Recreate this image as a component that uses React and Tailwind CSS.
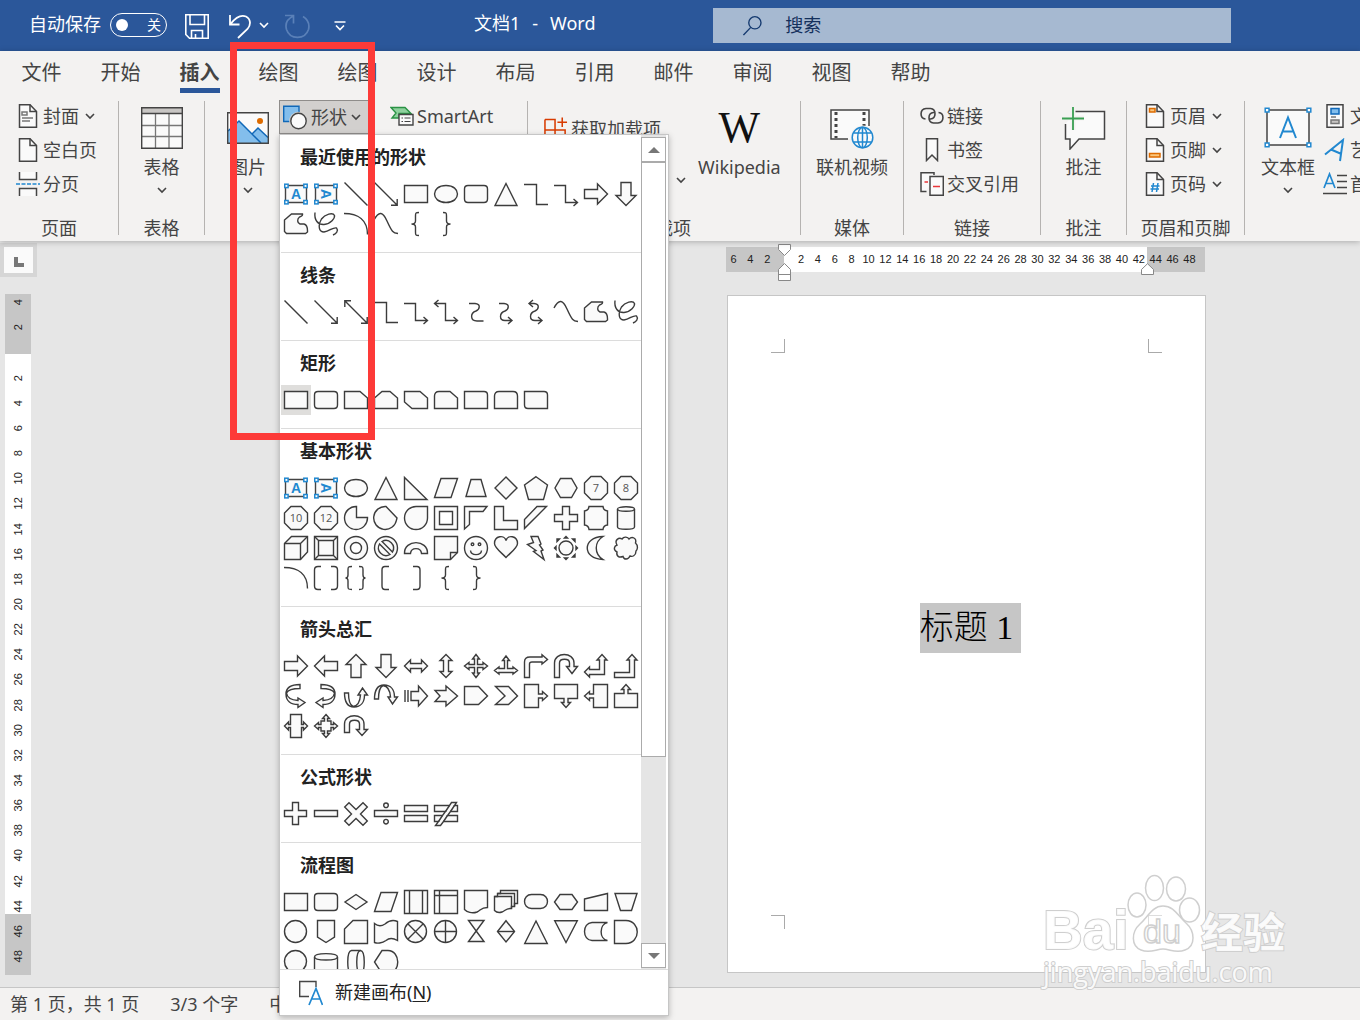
const OCTAGON = 'M7 .5H17L23.5 7V17L17 23.5H7L.5 17V7Z';
const RING = 'M12 .5A11.5 11.5 0 1 0 12 23.5A11.5 11.5 0 1 0 12 .5Z';
const RING_SMALL = 'M11.5 .5A11 11 0 1 0 11.5 22.5A11 11 0 1 0 11.5 .5Z';
const CURVED = 'M15 .5C6 .5 1 4 1 10C1 17 6 20.5 13 20.5V23.5L20 18.5L13 14V16.5C6 16 2 13 1.5 9C3 6 8 4.5 15 4.5Z';

// f = filled outline, l = plain line, n = number, t = transform
const SHAPES = {
  line:            { l: 'M.5 .5L23.5 23.5' },
  arrow:           { l: 'M.5 .5L23 23M17 23.2H23.2V17' },
  doubleArrow:     { l: 'M1 1L23 23M17 23.2H23.2V17M7 .8H.8V7' },
  rect:            { f: 'M.5 3.5H23.5V20.5H.5Z' },
  ellipse:         { f: 'M12 3.5C-3.3 3.5-3.3 20.5 12 20.5C27.3 20.5 27.3 3.5 12 3.5Z' },
  roundRect:       { f: 'M4 3.5H20Q23.5 3.5 23.5 7V17Q23.5 20.5 20 20.5H4Q.5 20.5 .5 17V7Q.5 3.5 4 3.5Z' },
  triangle:        { f: 'M12 1.5L23 23.5H1Z' },
  elbow:           { l: 'M0 2.5H12.5V22.5H24' },
  elbowArrow:      { l: 'M0 3.5H11.5V20.5H23.5M19.5 17L23.5 20.5 19.5 24' },
  elbowDouble:     { l: 'M.5 3.5H11.5V20.5H23.5M19.5 17L23.5 20.5 19.5 24M4.5 0L.5 3.5 4.5 7' },
  arrowRight:      { f: 'M.5 7.5H13.5V2L23.5 12 13.5 22V16.5H.5Z' },
  arrowLeft:       { f: 'M23.5 7.5H10.5V2L.5 12 10.5 22V16.5H23.5Z' },
  arrowUp:         { f: 'M7 23.5V10.5H2L12 .5 22 10.5H17V23.5Z' },
  arrowDown:       { f: 'M7 .5V13.5H2L12 23.5 22 13.5H17V.5Z' },
  freeform:        { f: 'M.5 8L7.5 2H18.5C19 4 18 4 15.5 5C13 7 13 11 16 12H20C24 13 23.5 17 23.5 20L21.5 21.5H2.5L.5 19.5Z' },
  scribble:        { l: 'M1 .5C0 8 4 13 10 12.5C17 12 21 6 20.5 3.5C19 0 11 2 7.5 7C3.5 14 5 20 10 20C16 19 19 15 22.5 16C25 19 22 21.5 19 23' },
  arc:             { l: 'M0 1.5C14 1.5 23.5 8 23.5 22.5' },
  curve:           { l: 'M0 8C5-1.5 9 0 13 9C18 20 19 21 24 21.5' },
  scurve:          { l: 'M5 3.5H11C17 4 16 9 12 11C6 13 6 21 13 21H19.5' },
  scurveArrow:     { l: 'M5 3.5H10C16 4 15 9 11 11C5 13 5 20.5 11 20.5H18M14 17L18 20.5 14 24' },
  scurveDouble:    { l: 'M5 3.5H10C16 4 15 9 11 11C5 13 5 20.5 11 20.5H18M14 17L18 20.5 14 24M9 0L5 3.5 9 7' },
  braceL:          { l: 'M15 .5C11.5 .5 11.5 1 11.5 4V9C11.5 11 10 12 7.5 12C10 12 11.5 13 11.5 15V20C11.5 23 11.5 23.5 15 23.5' },
  braceR:          { l: 'M9 .5C12.5 .5 12.5 1 12.5 4V9C12.5 11 14 12 16.5 12C14 12 12.5 13 12.5 15V20C12.5 23 12.5 23.5 9 23.5' },
  snip1:           { f: 'M.5 3.5H16L23.5 10V20.5H.5Z' },
  snip2:           { f: 'M.5 10L8 3.5H16L23.5 10V20.5H.5Z' },
  snipDiag:        { f: 'M.5 3.5H16L23.5 10V20.5H8L.5 14Z' },
  snipRound:       { f: 'M.5 8Q.5 3.5 5 3.5H16L23.5 10V20.5H.5Z' },
  round1:          { f: 'M.5 3.5H20Q23.5 3.5 23.5 7V20.5H.5Z' },
  round2:          { f: 'M.5 8Q.5 3.5 5 3.5H19Q23.5 3.5 23.5 8V20.5H.5Z' },
  roundDiag:       { f: 'M.5 3.5H20Q23.5 3.5 23.5 7V20.5H4Q.5 20.5 .5 17Z' },
  rightTriangle:   { f: 'M.5 1.5V23.5H23Z' },
  parallelogram:   { f: 'M7 2.5H23.5L17 21.5H.5Z' },
  trapezoid:       { f: 'M7 3.5H17L22 20.5H2Z' },
  diamond:         { f: 'M12 1L23 12 12 23 1 12Z' },
  pentagon:        { f: 'M12 .7L23.5 9 19.5 23.5H4.5L.5 9Z' },
  hexagon:         { f: 'M6.5 2.5H17.5L23 12 17.5 21.5H6.5L1 12Z' },
  heptagon:        { f: OCTAGON, n: '7' },
  octagon:         { f: OCTAGON, n: '8' },
  decagon:         { f: OCTAGON, n: '10' },
  dodecagon:       { f: OCTAGON, n: '12' },
  pie:             { f: 'M12.5 11.5H23.5A11.5 11.5 0 1 1 12.5 .5Z' },
  chord:           { f: 'M12 .5A11.5 11.5 0 1 0 22.5 14L23 12Z' },
  teardrop:        { f: 'M23.5 .5V12A11.5 11.5 0 1 1 12 .5Z' },
  frame:           { f: 'M.5 .5H23.5V23.5H.5ZM5.5 5.5V18.5H18.5V5.5Z' },
  halfFrame:       { f: 'M.5 .5H23L19 5.5H5.5V18.5L.5 23Z' },
  lShape:          { f: 'M.5 .5H9.5V14.5H23.5V23.5H.5Z' },
  stripe:          { f: 'M13 .5H22.5L.5 22.5V13.5Z' },
  cross:           { f: 'M8.5 .5H15.5V8.5H23.5V15.5H15.5V23.5H8.5V15.5H.5V8.5H8.5Z' },
  plaque:          { f: 'M5 .5H19A5 5 0 0 0 23.5 5V19A5 5 0 0 0 19 23.5H5A5 5 0 0 0 .5 19V5A5 5 0 0 0 5 .5Z' },
  can:             { f: 'M3.5 3C3.5 0 20.5 0 20.5 3V21C20.5 24 3.5 24 3.5 21Z', l: 'M3.5 3C3.5 6 20.5 6 20.5 3' },
  cube:            { f: 'M.5 7.5L7.5 .5H23.5V16L16.5 23.5H.5Z', l: 'M.5 7.5H16.5V23.5M16.5 7.5L23.5 .5' },
  bevel:           { f: 'M.5 .5H23.5V23.5H.5Z', l: 'M4.5 4.5H19.5V19.5H4.5ZM.5 .5L4.5 4.5M23.5 .5L19.5 4.5M.5 23.5L4.5 19.5M23.5 23.5L19.5 19.5' },
  donut:           { f: RING + 'M12 6.5A5.5 5.5 0 1 0 12 17.5A5.5 5.5 0 1 0 12 6.5Z' },
  noSymbol:        { f: RING, l: 'M8 5.5A7.7 7.7 0 0 1 18.5 16ZM5.5 8A7.7 7.7 0 0 0 16 18.5Z' },
  blockArc:        { f: 'M.5 17.5C0 3 24 3 23.5 17.5H17.5C17 11 7 11 6.5 17.5Z' },
  folded:          { f: 'M.5 .5H23.5V16.5L16.5 23.5H.5Z', l: 'M16.5 23.5V16.5H23.5' },
  smile:           { f: RING, l: 'M6.5 14.5C7 20 17 20 17.5 14.5M8.5 7A1.3 1.3 0 1 0 8.5 9.6A1.3 1.3 0 1 0 8.5 7M15.5 7A1.3 1.3 0 1 0 15.5 9.6A1.3 1.3 0 1 0 15.5 7' },
  heart:           { f: 'M12 4.5C13.5-1.5 23.5-.5 23.5 7.5C23.5 12 16 17 12 21.5C8 17 .5 12 .5 7.5C.5-.5 10.5-1.5 12 4.5Z' },
  lightning:       { f: 'M7 .5H14L17 8L15.5 9L19 14L17 15L20 23.5L9.5 15.5L12 14.5L3.5 8.5L9.5 6.5Z' },
  sun:             { f: 'M12 5A7 7 0 1 0 12 19A7 7 0 1 0 12 5Z', l: 'M10.5 2L12 .5 13.5 2ZM10.5 22L12 23.5 13.5 22ZM2 10.5L.5 12 2 13.5ZM22 10.5L23.5 12 22 13.5ZM3 5.5V3H5.5ZM21 5.5V3H18.5ZM3 18.5V21H5.5ZM21 18.5V21H18.5Z' },
  moon:            { f: 'M19 .5C-2 1-2 23 19 23.5C10 18 10 6 19 .5Z' },
  cloud:           { f: 'M3 9C0 4 5 1 8 3C10 0 14 1 15 3C18 0 23 2 21.5 7C25 10 23 14 22 15C22 20 18 21 16 20C14 24 10 24 9 20.5C5 22 2 20 3 16C-1 14 0 10 3 9Z' },
  bracketPair:     { l: 'M7 .5H4Q.5 .5 .5 4V20Q.5 23.5 4 23.5H7M17 .5H20Q23.5 .5 23.5 4V20Q23.5 23.5 20 23.5H17' },
  bracePair:       { l: 'M8 .5C4 .5 4 1 4 4V9Q4 12 1.5 12Q4 12 4 15V20C4 23 4 23.5 8 23.5M15 .5C19 .5 19 1 19 4V9Q19 12 21.5 12Q19 12 19 15V20C19 23 19 23.5 15 23.5' },
  bracketL:        { l: 'M15 .5H11Q8 .5 8 4V20Q8 23.5 11 23.5H15' },
  bracketR:        { l: 'M9 .5H13Q16 .5 16 4V20Q16 23.5 13 23.5H9' },
  leftRight:       { f: 'M.5 12L6.5 6V9.5H17.5V6L23.5 12 17.5 18V14.5H6.5V18Z' },
  upDown:          { f: 'M.5 12L6.5 6V9.5H17.5V6L23.5 12 17.5 18V14.5H6.5V18Z', t: 'rotate(90 12 12)' },
  quad:            { f: 'M12 .5L15.5 5H13.5V10.5H19V8.5L23.5 12 19 15.5V13.5H13.5V19H15.5L12 23.5 8.5 19H10.5V13.5H5V15.5L.5 12 5 8.5V10.5H10.5V5H8.5Z' },
  leftRightUp:     { f: 'M12 2L15.5 6.5H13.5V14.5H19V13L23.5 16.5 19 20V18.5H5V20L.5 16.5 5 13V14.5H10.5V6.5H8.5Z' },
  bent:            { f: 'M.5 23.5V8Q.5 3 6 3H18V.7L23.5 5.5 18 10V8H8Q5.5 8 5.5 10V23.5Z' },
  uTurn:           { f: 'M.5 23.5V9C.5-2.3 20-2.3 20 9V12.5H23.5L18 19.5 12.5 12.5H15.5V9C15.5 4 5.5 4 5.5 9V23.5Z' },
  leftUp:          { f: 'M.5 18L5.5 13V15.5H15.5V6H13L18 .5 23 6H20.5V20.5H5.5V23Z' },
  bentUp:          { f: 'M.5 18.5H15.5V6H13L18 .5 23 6H20.5V23.5H.5Z' },
  curvedRight:     { f: CURVED, t: 'translate(1 0)' },
  curvedLeft:      { f: CURVED, t: 'translate(22 0) scale(-1 1)' },
  curvedUp:        { f: CURVED, t: 'rotate(-90 12 12)' },
  curvedDown:      { f: CURVED, t: 'translate(0 24) scale(1 -1) rotate(-90 12 12)' },
  striped:         { f: 'M7 7.5H14.5V2L23.5 12 14.5 22V16.5H7Z', l: 'M1 6V18M4 6V18' },
  notched:         { f: 'M1 6.5H12V2L23.5 12 12 22V17.5H1L6 12Z' },
  homePlate:       { f: 'M.5 2.5H14.5L23.5 12 14.5 20.5H.5Z' },
  chevron:         { f: 'M1.5 2.5H14.5L23.5 12 14.5 20.5H1.5L11 12Z' },
  calloutRight:    { f: 'M.5 .5H14.5V10H18.5V7.5L23.5 12 18.5 16.5V14H14.5V23.5H.5Z' },
  calloutDown:     { f: 'M.5 .5H23.5V14.5H14V18.5H16.5L12 23.5 7.5 18.5H10V14.5H.5Z' },
  calloutLeft:     { f: 'M23.5 .5H9.5V10H5.5V7.5L.5 12 5.5 16.5V14H9.5V23.5H23.5Z' },
  calloutUp:       { f: 'M.5 23.5H23.5V9.5H14V5.5H16.5L12 .5 7.5 5.5H10V9.5H.5Z' },
  calloutLR:       { f: 'M6.5 .5H17.5V10.5H19.5V8L23.5 12 19.5 16V13.5H17.5V23.5H6.5V13.5H4.5V16L.5 12 4.5 8V10.5H6.5Z' },
  calloutQuad:     { f: 'M12 .5L15.5 4.5H13.5V7H17V10.5H19.5V8.5L23.5 12 19.5 15.5V13.5H17V17H13.5V19.5H15.5L12 23.5 8.5 19.5H10.5V17H7V13.5H4.5V15.5L.5 12 4.5 8.5V10.5H7V7H10.5V4.5H8.5Z' },
  circular:        { f: 'M.5 18.5V10C.5-1 20-1 20 10V15.5H23.5L18 21.5 12.5 15.5H15.5V10C15.5 5 5.5 5 5.5 10V18.5Z' },
  plus:            { f: 'M8.5 .5H14.5V8.5H22.5V14.5H14.5V22.5H8.5V14.5H.5V8.5H8.5Z' },
  minus:           { f: 'M.5 8.5H23.5V14.5H.5Z' },
  multiply:        { f: 'M5 .7L12 7.5 19 .7 23.3 5 16.5 12 23.3 19 19 23.3 12 16.5 5 23.3 .7 19 7.5 12 .7 5Z' },
  divide:          { f: 'M.5 8.5H23.5V14.5H.5ZM12 1A2.3 2.3 0 1 0 12 5.6A2.3 2.3 0 1 0 12 1ZM12 17.4A2.3 2.3 0 1 0 12 22A2.3 2.3 0 1 0 12 17.4Z' },
  equal:           { f: 'M.5 3.5H23.5V9.5H.5ZM.5 13.5H23.5V19.5H.5Z' },
  notEqual:        { f: 'M.5 3.5H15.5L17.5 .5H22.5L20.5 3.5H23.5V9.5H16.5L13.5 13.5H23.5V19.5H9.5L6.5 23.5H1.5L4.5 19.5H.5V13.5H8.5L11.5 9.5H.5Z', l: 'M15.5 3.5L11.5 9.5M20.5 3.5L16.5 9.5M8.5 13.5L4.5 19.5M13.5 13.5L9.5 19.5' },
  decision:        { f: 'M12 4.5L23 12 12 19.5 1 12Z' },
  predefined:      { f: 'M.5 .5H23.5V23.5H.5Z', l: 'M5.5 .5V23.5M18.5 .5V23.5' },
  internal:        { f: 'M.5 .5H23.5V23.5H.5Z', l: 'M5.5 .5V23.5M.5 5.5H23.5' },
  document:        { f: 'M.5 .5H23.5V17.5C17 17.5 17 20 13 22C8 24 3 22 .5 19.5Z' },
  multiDocument:   { f: 'M6.5 .5H23.5V13.5H20.5V16.5H17.5V18.5C12 18 11 21 8 22C5 23 2 22 .5 20.5V6.5H3.5V3.5H6.5Z', l: 'M.5 6.5H17.5V18.5M3.5 3.5H20.5V16.5' },
  terminator:      { f: 'M7.5 4.5H16.5C25.8 4.5 25.8 18.5 16.5 18.5H7.5C-1.8 18.5-1.8 4.5 7.5 4.5Z' },
  preparation:     { f: 'M6 4.5H18L23.5 12 18 19.5H6L.5 12Z' },
  manualInput:     { f: 'M.5 9L23.5 3.5V20.5H.5Z' },
  manualOp:        { f: 'M1 3.5H23L17.5 20.5H6.5Z' },
  connector:       { f: RING_SMALL },
  offPage:         { f: 'M3.5 .5H20.5V17L12 22.5 3.5 17Z' },
  card:            { f: 'M9 .5H23.5V23.5H.5V9Z' },
  tape:            { f: 'M.5 3.5C4 6.5 8 6 11 4C15 .5 20 0 23.5 1.5V20.5C19 18 15 18 12 20.5C8 23.5 3 23.5 .5 22.5Z' },
  summing:         { f: RING_SMALL, l: 'M4 4L19 19M19 4L4 19' },
  or:              { f: RING_SMALL, l: 'M11.5 .5V22.5M.5 11.5H22.5' },
  collate:         { f: 'M4.5 .5H20L12.2 11 4.5 21.5H20L12.2 11Z' },
  sort:            { f: 'M12 .7L20.5 11.5 12 22 3.5 11.5Z', l: 'M3.5 11.5H20.5' },
  extract:         { f: 'M12 1L23.3 23.5H.7Z' },
  merge:           { f: 'M.7 .7H23.3L12 22.5Z' },
  stored:          { f: 'M8 2.5H23.5C15 4 15 19.5 23.5 20.5H8C-2 20-2 3 8 2.5Z' },
  delay:           { f: 'M.5 .5H12C27 1 27 23 12 23.5H.5Z' },
  disk:            { f: 'M.5 7C.5 2.5 23.5 2.5 23.5 7V20C23.5 24 .5 24 .5 20Z', l: 'M.5 7C.5 11 23.5 11 23.5 7' },
  direct:          { f: 'M7.5 .5H16.5C21.5 1 21.5 23 16.5 23.5H7.5C2.5 23 2.5 1 7.5 .5Z', l: 'M16.5 .5C11.5 1 11.5 23 16.5 23.5' },
  display:         { f: 'M8 .5H14C27 1 27 23 14 23.5H8L.5 12Z' },
};

const SECTIONS = [
  { title: '最近使用的形状', items: 'textH textV line arrow rect ellipse roundRect triangle elbow elbowArrow arrowRight arrowDown freeform scribble arc curve braceL braceR' },
  { title: '线条', items: 'line arrow doubleArrow elbow elbowArrow elbowDouble scurve scurveArrow scurveDouble curve freeform scribble' },
  { title: '矩形', items: 'rect roundRect snip1 snip2 snipDiag snipRound round1 round2 roundDiag', active: 0 },
  { title: '基本形状', items: 'textH textV ellipse triangle rightTriangle parallelogram trapezoid diamond pentagon hexagon heptagon octagon decagon dodecagon pie chord teardrop frame halfFrame lShape stripe cross plaque can cube bevel donut noSymbol blockArc folded smile heart lightning sun moon cloud arc bracketPair bracePair bracketL bracketR braceL braceR' },
  { title: '箭头总汇', items: 'arrowRight arrowLeft arrowUp arrowDown leftRight upDown quad leftRightUp bent uTurn leftUp bentUp curvedRight curvedLeft curvedUp curvedDown striped notched homePlate chevron calloutRight calloutDown calloutLeft calloutUp calloutLR calloutQuad circular' },
  { title: '公式形状', items: 'plus minus multiply divide equal notEqual' },
  { title: '流程图', items: 'rect roundRect decision parallelogram predefined internal document multiDocument terminator preparation manualInput manualOp connector offPage card tape summing or collate sort extract merge stored delay connector disk direct display' },
];

function ShapeIcon({ name }) {
  if (name === 'textH' || name === 'textV') {
    return (
      <svg width="24" height="24" viewBox="0 0 24 24" fill="none">
        <path d="M1.5 3.5H22.5V20.5H1.5Z" fill="#fafafa" stroke="#444" strokeWidth="1.4" />
        {[[.7, 2.2], [19.8, 2.2], [.7, 18.5], [19.8, 18.5]].map(([x, y]) => (
          <rect key={x + '-' + y} x={x} y={y} width="3.4" height="3.4" fill="#fff" stroke="#2188d0" strokeWidth="1.5" />
        ))}
        <text x="12" y="17" fontSize="14" fontWeight="700" textAnchor="middle" fill="#2188d0"
              fontFamily="Liberation Sans, sans-serif" transform={name === 'textV' ? 'rotate(90 12 12)' : undefined}>A</text>
      </svg>
    );
  }
  const s = SHAPES[name];
  return (
    <svg width="24" height="24" viewBox="0 0 24 24" fill="none" stroke="#3c3c3c" strokeWidth="1.4" overflow="visible">
      <g transform={s.t}>
        {s.f && <path d={s.f} fill="#fafafa" fillRule="evenodd" />}
        {s.l && <path d={s.l} />}
      </g>
      {s.n && (
        <text x="12" y="16" fontSize="11" textAnchor="middle" fill="#555" stroke="none" fontFamily="Open Sans, sans-serif">{s.n}</text>
      )}
    </svg>
  );
}

function Chevron({ className = '' }) {
  return (
    <svg className={className} width="10" height="10" viewBox="0 0 10 10" fill="none" stroke="currentColor" strokeWidth="1.6">
      <path d="M1 3l4 4 4-4" />
    </svg>
  );
}

function ShapesMenu() {
  return (
    <div className="absolute left-0 top-[34px] z-20 flex h-[882px] w-[390px] flex-col border border-[#c6c6c6] bg-white shadow-[0_2px_6px_rgba(0,0,0,0.25)]">
      <div className="flex min-h-0 flex-1">
        <div className="ml-px w-[360px] overflow-hidden">
          {SECTIONS.map(sec => (
            <section key={sec.title} className="border-b border-[#dcdcdc] pb-[13px]">
              <h3 className="pl-[19px] text-[18px] leading-[44px] font-bold text-[#222]">{sec.title}</h3>
              <div className="grid grid-cols-12">
                {sec.items.split(' ').map((name, i) => (
                  <button key={i} type="button" aria-label={name}
                          className={'flex h-[30px] items-center justify-center ' + (sec.active === i ? 'bg-[#dfdedc]' : '')}>
                    <ShapeIcon name={name} />
                  </button>
                ))}
              </div>
            </section>
          ))}
        </div>
        <div className="flex w-[25px] flex-col bg-[#e5e5e5] pt-[2px] pb-px">
          <button type="button" aria-label="向上" className="flex h-[25px] items-center justify-center border border-[#ababab] bg-white">
            <svg width="12" height="6" viewBox="0 0 12 6"><path d="M0 6L6 0L12 6Z" fill="#777" /></svg>
          </button>
          <div className="h-[595px] border border-[#ababab] bg-white" />
          <button type="button" aria-label="向下" className="mt-auto flex h-[25px] items-center justify-center border border-[#ababab] bg-white">
            <svg width="12" height="6" viewBox="0 0 12 6"><path d="M0 0L6 6L12 0Z" fill="#777" /></svg>
          </button>
        </div>
      </div>
      <button type="button" className="flex h-[46px] items-center gap-3 border-t border-[#dcdcdc] pl-[19px] text-[18px] text-[#222]">
        <svg width="24" height="26" viewBox="0 0 24 26" fill="none">
          <path d="M17 7V1.5H.7V16.5H10" fill="#fafafa" stroke="#444" strokeWidth="1.4" />
          <path d="M10 25L17 8.5L23.5 25M12.5 19H21" stroke="#2188d0" strokeWidth="1.7" />
        </svg>
        <span>新建画布(<u className="underline-offset-2">N</u>)</span>
      </button>
    </div>
  );
}

function Group({ label, className, children }) {
  return (
    <div className={'flex shrink-0 flex-col ' + className}>
      <div className="flex h-[119px]">{children}</div>
      <div className="text-center text-[18px] leading-[28px] whitespace-nowrap">{label}</div>
    </div>
  );
}

function Divider() {
  return <div className="mt-[6px] h-[134px] w-px shrink-0 bg-[#b5b3b1]" />;
}

function BigButton({ icon, label, arrow, className = '' }) {
  return (
    <button type="button" className={'flex shrink-0 flex-col items-center text-[18px] leading-[24px] whitespace-nowrap ' + className}>
      <span className="flex h-[60px] items-center pt-[6px]">{icon}</span>
      {label}
      {arrow && <Chevron className="mt-[6px]" />}
    </button>
  );
}

function SmallButton({ icon, label, arrow }) {
  return (
    <button type="button" className="flex h-[34px] items-center text-[18px] whitespace-nowrap">
      <span className="mr-[3px] flex w-6 shrink-0 justify-center">{icon}</span>
      {label}
      {arrow && <Chevron className="ml-[6px]" />}
    </button>
  );
}

function PageIcon({ children }) {
  return (
    <svg width="20" height="24" viewBox="0 0 20 24" fill="none" stroke="#444" strokeWidth="1.5">
      <path d="M1.5 .7H12L18.5 7.5V23.3H1.5Z" fill="#fafafa" />
      <path d="M12 .7V7.5H18.5" />
      {children}
    </svg>
  );
}

const TABS = ['文件', '开始', '插入', '绘图', '绘图', '设计', '布局', '引用', '邮件', '审阅', '视图', '帮助'];

function TitleBar() {
  return (
    <header className="flex h-[51px] shrink-0 bg-[#2b579a] text-[18px] text-white">
      <div className="flex h-[49px] w-[474px] shrink-0 items-center pl-[29px]">
        <span id="autosave">自动保存</span>
        <button type="button" role="switch" aria-checked="false" aria-labelledby="autosave"
                className="ml-[9px] flex h-6 w-[57px] items-center justify-between rounded-full border border-white px-[5px] text-[14px] leading-none">
          <span className="size-3 rounded-full bg-white" />
          关
        </button>
        <button type="button" aria-label="保存" className="mt-1 ml-[18px]">
          <svg width="24" height="25" viewBox="0 0 24 25" fill="none" stroke="#fff" strokeWidth="1.6">
            <path d="M.8 .8H23.2V24.2H4.5L.8 20.5Z" />
            <path d="M5 .8V10.5H19.5V.8M6.5 24V16.5H17.5V24M10.5 20V24" />
          </svg>
        </button>
        <button type="button" aria-label="撤消" className="mt-1 ml-5">
          <svg width="22" height="25" viewBox="0 0 22 25" fill="none" stroke="#fff" strokeWidth="1.8">
            <path d="M1 1V10.5H10.5M1.5 10C7 3 12 .5 17 2.5C22 5 22 11 18.5 15L9 24" />
          </svg>
        </button>
        <Chevron className="ml-2" />
        <button type="button" aria-label="恢复" className="mt-1 ml-4">
          <svg width="25" height="25" viewBox="0 0 25 25" fill="none" stroke="#5a80b8" strokeWidth="1.7">
            <path d="M0 1.5H8.5V9.5M8.5 2C2 5 0 10 1.5 15.5C5 26 20 26 23.5 15.5C25 9 22 5 18 2.5" />
          </svg>
        </button>
        <button type="button" aria-label="自定义" className="mt-[3px] ml-6">
          <svg width="12" height="10" viewBox="0 0 12 10" fill="none" stroke="#fff" strokeWidth="1.6">
            <path d="M.5 1H11.5M2 4.5L6 8.5L10 4.5" />
          </svg>
        </button>
      </div>
      <h1 className="flex w-[239px] shrink-0 gap-3 leading-[46px]"><span>文档1</span><span>-</span><span>Word</span></h1>
      <label className="mt-2 flex h-[35px] w-[518px] items-center bg-[#a6b9d1] pl-[30px]">
        <svg width="21" height="22" viewBox="0 0 21 22" fill="none" stroke="#14396f" strokeWidth="1.5">
          <circle cx="13" cy="7.5" r="6.7" />
          <path d="M8.5 12.5L.5 21" />
        </svg>
        <input aria-label="搜索" placeholder="搜索" className="ml-[23px] w-full bg-transparent outline-none placeholder:text-[#14305c]" />
      </label>
    </header>
  );
}

function Ribbon() {
  return (
    <div className="relative z-10 h-[190px] shrink-0 bg-[#f3f2f1] text-[#444] shadow-[0_1px_6px_rgba(0,0,0,0.25)]">
      <nav className="flex h-[44px] pl-[2px]">
        {TABS.map((t, i) => (
          <button key={i} type="button" className="flex w-[79px] shrink-0 flex-col items-center text-[20px] leading-[44px]">
            <span className={i === 2 ? 'h-[42px] border-b-[5px] border-[#2b579a] font-bold' : ''}>{t}</span>
          </button>
        ))}
      </nav>
      <div className="flex">
        <Group label="页面" className="w-[118px]">
          <div className="pt-1 pl-4">
            <SmallButton icon={<PageIcon><path d="M4 8H9V11H4ZM4 14H15M4 17H12" stroke="#777" /></PageIcon>} label="封面" arrow />
            <SmallButton icon={<PageIcon />} label="空白页" />
            <SmallButton label="分页" icon={
              <svg width="24" height="24" viewBox="0 0 24 24" fill="none" stroke="#444" strokeWidth="1.5">
                <path d="M3.5 0V7.5H20.5V0M3.5 24V16.5H20.5V24" fill="#fafafa" />
                <path d="M0 12H24" stroke="#2188d0" strokeDasharray="4 1.5" />
              </svg>
            } />
          </div>
        </Group>
        <Divider />
        <Group label="表格" className="w-[85px]">
          <BigButton label="表格" arrow className="w-full" icon={
            <svg width="42" height="42" viewBox="0 0 42 42" fill="none">
              <path d="M.7 .7H41.3V41.3H.7Z" fill="#fafafa" />
              <path d="M.7 .7H41.3V6.5H.7Z" fill="#c8c6c4" />
              <path d="M14.5 7V41M28 7V41M1 18.5H41M1 29.5H41" stroke="#777" strokeWidth="1.3" />
              <path d="M.7 .7H41.3V41.3H.7ZM.7 6.5H41.3" stroke="#444" strokeWidth="1.4" />
            </svg>
          } />
        </Group>
        <Divider />
        <Group label="" className="w-[322px]">
          <BigButton label="图片" arrow className="ml-[22px] w-[42px]" icon={
            <svg width="42" height="32" viewBox="0 0 42 32" fill="none">
              <path d="M.7 .7H41.3V31.3H.7Z" fill="#fafafa" />
              <path d="M1 19L12 9L25 22L31 16L41 25.5V31H1Z" fill="#83beec" />
              <path d="M1 19L12 9L34 31M25 22L31 16L41 25.5" stroke="#1068b8" strokeWidth="1.5" />
              <circle cx="33" cy="9" r="3" fill="#dd6b00" />
              <path d="M.7 .7H41.3V31.3H.7Z" stroke="#444" strokeWidth="1.4" />
            </svg>
          } />
          <div className="relative ml-[10px] pt-[5px]">
            <button type="button" aria-expanded="true" className="flex h-[34px] w-[93px] items-center border border-[#8f8d8b] bg-[#d2d0ce] pl-[3px] text-[18px] whitespace-nowrap">
              <svg width="24" height="25" viewBox="0 0 24 25" fill="none">
                <path d="M.7 1.2H16V16.5H.7Z" fill="#83beec" stroke="#1068b8" strokeWidth="1.4" />
                <circle cx="15.5" cy="16" r="9.3" fill="#d2d0ce" />
                <circle cx="15.5" cy="16" r="7.7" fill="#fafafa" stroke="#444" strokeWidth="1.4" />
              </svg>
              <span className="mr-1 ml-1">形状</span>
              <Chevron />
            </button>
            <div className="absolute top-[5px] left-0"><ShapesMenu /></div>
          </div>
          <div className="pt-1 pl-[18px]">
            <SmallButton label="SmartArt" icon={
              <svg width="24" height="20" viewBox="0 0 24 20" fill="none">
                <path d="M1 1.5H15L21 7.5H9V12H2L6 7Z" fill="#8fd19e" stroke="#2a9244" strokeWidth="1.4" />
                <path d="M9 8.5H23V19H9Z" fill="#fafafa" stroke="#444" strokeWidth="1.4" />
                <path d="M11.5 12H13M14.5 12H20.5M11.5 15.5H13M14.5 15.5H20.5" stroke="#444" strokeWidth="1.2" />
              </svg>
            } />
          </div>
        </Group>
        <Divider />
        <Group label="加载项" className="w-[272px]">
          <div className="w-[148px] pt-[17px] pl-[16px]">
            <SmallButton label="获取加载项" icon={
              <svg width="25" height="25" viewBox="0 0 25 25" fill="none" stroke="#d83b01" strokeWidth="1.6">
                <path d="M1 2H11.5V13M1 2V23.5H22V13H1M11.5 13V23.5M19 0V10M14 5H24" />
              </svg>
            } />
          </div>
          <Chevron className="mt-[80px]" />
          <BigButton label="Wikipedia" className="ml-3" icon={
            <span className="font-['Liberation_Serif',serif] text-[44px] leading-[40px] text-[#111]">W</span>
          } />
        </Group>
        <Divider />
        <Group label="媒体" className="w-[102px]">
          <BigButton label="联机视频" className="w-full" icon={
            <svg width="46" height="42" viewBox="0 0 46 42" fill="none">
              <path d="M2 3H40V32H2Z" fill="#fafafa" />
              <path d="M40 19V3H2V32H19" stroke="#444" strokeWidth="1.5" />
              <path d="M7 5V31M35 5V19" stroke="#444" strokeWidth="3" strokeDasharray="3 3" />
              <circle cx="33.5" cy="30.5" r="12" fill="#f3f2f1" />
              <g stroke="#2188d0" strokeWidth="1.5">
                <circle cx="33.5" cy="30.5" r="10.3" fill="#fafafa" />
                <ellipse cx="33.5" cy="30.5" rx="4.8" ry="10.3" />
                <path d="M33.5 20V41M24.5 26H42.5M24.5 35H42.5" />
              </g>
            </svg>
          } />
        </Group>
        <Divider />
        <Group label="链接" className="w-[136px]">
          <div className="pt-1 pl-4">
            <SmallButton label="链接" icon={
              <svg width="24" height="18" viewBox="0 0 24 18" fill="none" stroke="#444" strokeWidth="1.6">
                <path d="M5.5 12C-.5 11.5-.5 2 6 1.5H10.5C16.5 2 16.5 11.5 10.5 12H9M18.5 5.5C24.5 6 24.5 15.500 18 16H13.500C7.500 15.500 7.500 6 13.500 5.500H15" />
              </svg>
            } />
            <SmallButton label="书签" icon={
              <svg width="14" height="24" viewBox="0 0 14 24" fill="#fafafa" stroke="#444" strokeWidth="1.5">
                <path d="M1.5 .8H12.5V22.5L7 17L1.5 22.5Z" />
              </svg>
            } />
            <SmallButton label="交叉引用" icon={
              <svg width="24" height="24" viewBox="0 0 24 24" fill="#fafafa" stroke="#444" strokeWidth="1.5">
                <path d="M6.5 19.5H1V.7H14V3" />
                <path d="M10 4.5H23.3V23.3H10Z" />
                <path d="M4.5 10H8M13 14.5H20" stroke="#e8373a" strokeWidth="1.6" />
              </svg>
            } />
          </div>
        </Group>
        <Divider />
        <Group label="批注" className="w-[85px]">
          <BigButton label="批注" className="w-full" icon={
            <svg width="46" height="44" viewBox="0 0 46 44" fill="none">
              <path d="M14 5.5H43.5V33H18L9 43V33H4.5V18" fill="#fafafa" stroke="#444" strokeWidth="1.5" />
              <path d="M12 0V24M0 12H23" stroke="#f3f2f1" strokeWidth="5" />
              <path d="M12 1V24M1 12.5H23" stroke="#3a9f53" strokeWidth="1.8" />
            </svg>
          } />
        </Group>
        <Divider />
        <Group label="页眉和页脚" className="w-[117px]">
          <div className="pt-1 pl-4">
            <SmallButton label="页眉" arrow icon={<PageIcon><path d="M4.5 4.5H10V8H4.5Z" fill="#fbc77d" stroke="#dd6b00" /></PageIcon>} />
            <SmallButton label="页脚" arrow icon={<PageIcon><path d="M4.5 15.5H15V19H4.5Z" fill="#fbc77d" stroke="#dd6b00" /></PageIcon>} />
            <SmallButton label="页码" arrow icon={<PageIcon><path d="M8.5 11L7 20M13 11L11.5 20M6 14H14.5M5.5 17H14" stroke="#2188d0" /></PageIcon>} />
          </div>
        </Group>
        <Divider />
        <Group label="" className="w-[180px]">
          <BigButton label="文本框" arrow className="ml-4" icon={
            <svg width="48" height="42" viewBox="0 0 48 42" fill="none">
              <path d="M3 3H45V38H3Z" fill="#fafafa" stroke="#444" strokeWidth="1.5" />
              <path d="M1.2 1.2H5V5H1.2ZM43 1.2H46.8V5H43ZM1.2 36H5V39.8H1.2ZM43 36H46.8V39.8H43Z" fill="#fff" stroke="#2188d0" strokeWidth="1.5" />
              <path d="M16 31L24 10.5L32 31M19 24.5H29" stroke="#2188d0" strokeWidth="2" />
            </svg>
          } />
          <div className="pt-1 pl-2">
            <SmallButton label="文档部件" icon={
              <svg width="18" height="24" viewBox="0 0 18 24" fill="none" strokeWidth="1.5">
                <path d="M1 .7H17V23.3H1Z" fill="#fafafa" stroke="#444" />
                <path d="M5 4.5H13V10H5Z" fill="#83beec" stroke="#1068b8" />
                <path d="M5 13H10M5 16H13V19.5H5Z" stroke="#777" fill="#c8c6c4" />
              </svg>
            } />
            <SmallButton label="艺术字" icon={
              <svg width="22" height="24" viewBox="0 0 22 24" fill="none" stroke="#2188d0" strokeWidth="2">
                <path d="M1 16.5L19 2L16 23M7 11.5L17.5 16" />
              </svg>
            } />
            <SmallButton label="首字下沉" icon={
              <svg width="24" height="24" viewBox="0 0 24 24" fill="none" stroke="#444" strokeWidth="1.5">
                <path d="M1 16L6.5 2L12 16M3 11.5H10" stroke="#2188d0" strokeWidth="1.7" />
                <path d="M14 3.5H24M14 9.5H24M14 15.5H24M0 21.5H24" />
              </svg>
            } />
          </div>
        </Group>
      </div>
    </div>
  );
}

const H_MARKS = ['6', '4', '2', '', ...Array.from({ length: 24 }, (_, i) => String(2 * (i + 1)))];
const V_MARKS = H_MARKS.slice(1);

function HorizontalRuler() {
  return (
    <div className="relative flex h-[25px] w-[479px] bg-white font-['Liberation_Sans',sans-serif] text-[11px] text-[#222]">
      <div className="w-[58px] bg-[#c6c6c6]" />
      <div className="ml-auto w-[58px] bg-[#c6c6c6]" />
      <div className="absolute inset-y-0 -left-px flex w-[473px] items-center">
        {H_MARKS.map((m, i) => <span key={i} className="flex-1 basis-0 text-center">{m}</span>)}
      </div>
      <svg className="absolute -top-[3px] left-[52px]" width="13" height="37" viewBox="0 0 13 37" fill="#fff" stroke="#888">
        <path d="M.5 .5H12.5V5.5L6.5 11.5L.5 5.5ZM6.5 19.5L12.5 25.5V36.5H.5V25.5ZM.5 30.5H12.5" />
      </svg>
      <svg className="absolute top-4 left-[415px]" width="13" height="12" viewBox="0 0 13 12" fill="#fff" stroke="#888">
        <path d="M6.5 .7L12.5 6.5V11.5H.5V6.5Z" />
      </svg>
    </div>
  );
}

function VerticalRuler() {
  return (
    <div className="relative mt-[17px] ml-[5px] flex h-[681px] w-[26px] flex-col bg-white font-['Liberation_Sans',sans-serif] text-[11px] text-[#222]">
      <div className="h-[60px] bg-[#c6c6c6]" />
      <div className="mt-auto h-[61px] bg-[#c6c6c6]" />
      <div className="absolute inset-x-0 -top-1 flex h-[679px] flex-col">
        {V_MARKS.map((m, i) => (
          <span key={i} className="flex flex-1 items-center justify-center"><span className="-rotate-90">{m}</span></span>
        ))}
      </div>
    </div>
  );
}

function Watermark() {
  return (
    <svg className="absolute right-[68px] bottom-[24px]" width="252" height="124" viewBox="0 0 252 124"
         fill="#fff" fillOpacity="0.6" stroke="#cfcfcf" strokeWidth="1.5">
      <ellipse cx="97" cy="33" rx="9" ry="12" />
      <ellipse cx="114.5" cy="16" rx="9" ry="12.5" />
      <ellipse cx="136" cy="17" rx="9.5" ry="12" />
      <ellipse cx="149.5" cy="38" rx="10" ry="12" />
      <path d="M123 34C134 34 138 44 146 51C155 59 156 74 145 78C136 82 130 77 123 77C116 77 110 82 101 78C91 74 91 60 100 52C108 45 112 34 123 34Z" />
      <text x="103" y="71" fontSize="34" fontFamily="Liberation Sans, sans-serif">du</text>
      <g fontFamily="Liberation Sans, Noto Sans CJK SC, sans-serif" fontWeight="700" fillOpacity="0.9" strokeWidth="2" paintOrder="stroke">
        <text x="3" y="77" fontSize="55">Bai</text>
        <text x="161" y="76" fontSize="42">经验</text>
      </g>
      <text x="3" y="110" fontSize="27" fontWeight="500" fillOpacity="0.9" strokeWidth="2" paintOrder="stroke" fontFamily="Open Sans, sans-serif">jingyan.baidu.com</text>
    </svg>
  );
}

export default function App() {
  return (
    <div className="relative flex min-h-screen flex-col overflow-hidden bg-[#e6e6e6] font-['Noto_Sans','Noto_Sans_CJK_SC',sans-serif]">
      <TitleBar />
      <Ribbon />
      <main className="flex flex-1">
        <div className="w-[37px] shrink-0 pt-[2px]">
          <button type="button" aria-label="制表符" className="flex h-[34px] w-full items-center justify-center border-4 border-[#d6d6d6] bg-[#fafafa]">
            <span className="mt-1 size-[10px] border-b-4 border-l-4 border-[#777]" />
          </button>
          <VerticalRuler />
        </div>
        <div className="flex shrink-0 flex-col pt-[6px] pb-[14px] pl-[689px]">
          <HorizontalRuler />
          <article className="mt-[23px] ml-px flex w-[479px] flex-1 flex-col border border-[#c6c6c6] bg-white px-[43px] pt-[43px] pb-[43px]">
            <div className="flex justify-between">
              <span className="size-[14px] border-r border-b border-[#aaa]" />
              <span className="size-[14px] border-b border-l border-[#aaa]" />
            </div>
            <div className="flex flex-1 items-center justify-center pb-3 pl-[8px]">
              <h2 className="h-[50px] bg-[#c6c6c6] pr-2 font-['Liberation_Serif','Noto_Sans_CJK_SC',serif] text-[34px] leading-[50px] font-light text-black">标题 1</h2>
            </div>
            <div className="flex justify-between">
              <span className="size-[14px] border-t border-r border-[#aaa]" />
              <span className="size-[14px] border-t border-l border-[#aaa]" />
            </div>
          </article>
        </div>
      </main>
      <footer className="flex h-[33px] shrink-0 items-center gap-[31px] border-t border-[#c6c6c6] bg-[#f3f2f1] pl-[10px] text-[18px] text-[#444]">
        <span>第 1 页，共 1 页</span>
        <span>3/3 个字</span>
        <span>中文(中国)</span>
      </footer>
      <Watermark />
      <div className="pointer-events-none absolute top-[42px] left-[230px] z-30 h-[398px] w-[145px] border-[7px] border-[#fd3a38]" />
    </div>
  );
}
